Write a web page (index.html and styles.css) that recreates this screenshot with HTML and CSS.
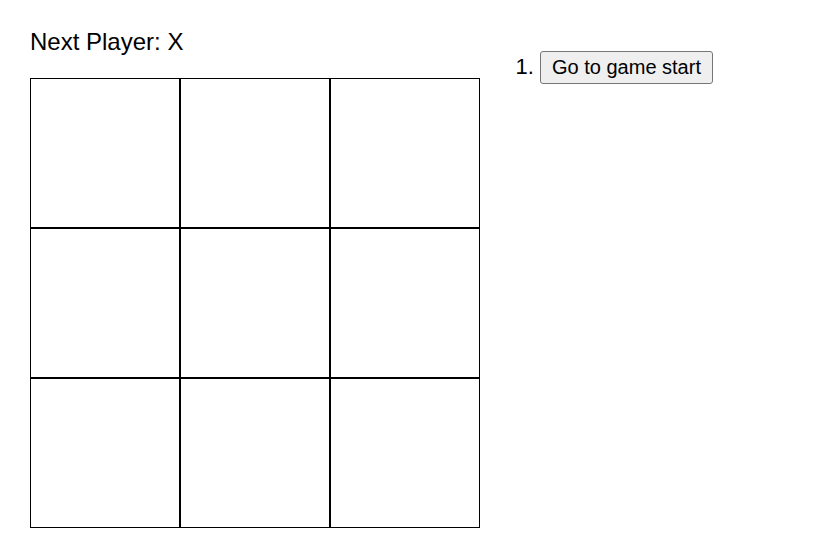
FILE: index.html
```html
<!DOCTYPE html>
<html>
<head>
<meta charset="utf-8">
<link rel="stylesheet" href="styles.css">
</head>
<body>
<div class="game">
  <div class="game-board">
    <div class="status">Next Player: X</div>
    <div class="board">
      <div class="board-row">
        <button class="square"></button><button class="square"></button><button class="square"></button>
      </div>
      <div class="board-row">
        <button class="square"></button><button class="square"></button><button class="square"></button>
      </div>
      <div class="board-row">
        <button class="square"></button><button class="square"></button><button class="square"></button>
      </div>
    </div>
  </div>
  <div class="game-info">
    <ol class="moves">
      <li><button class="move-btn">Go to game start</button></li>
    </ol>
  </div>
</div>
</body>
</html>
```
FILE: styles.css
```css
body {
  margin: 0;
  font-family: "Liberation Sans", Arial, sans-serif;
  color: #000;
  background: #fff;
}
.game {
  display: flex;
  align-items: flex-start;
  padding: 28px 30px;
}
.status {
  font-size: 24px;
  line-height: 27px;
  margin-bottom: 23px;
}
.board {
  display: flex;
  flex-direction: column;
}
.board-row {
  display: flex;
}
.square {
  width: 150px;
  height: 150px;
  box-sizing: border-box;
  border: 1px solid #000;
  background: #fff;
  margin: 0;
  padding: 0;
}
.game-info {
  margin-left: 20px;
}
.moves {
  margin: 23px 0 0 0;
  padding-left: 40px;
  font-size: 22px;
}
.move-btn {
  font-family: "Liberation Sans", Arial, sans-serif;
  font-size: 20px;
  color: #000;
  background: #efefef;
  border: 1px solid #767676;
  border-radius: 3px;
  padding: 4px 11px;
}
```
